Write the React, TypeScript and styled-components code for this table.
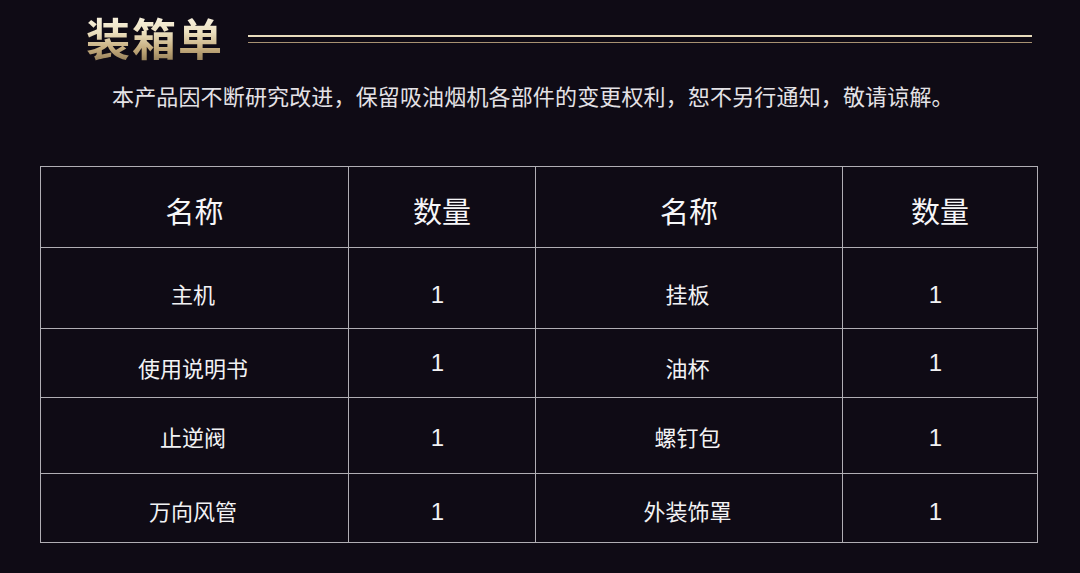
import React from "react";
import styled, { createGlobalStyle } from "styled-components";

const Global = createGlobalStyle`
  html, body { margin: 0; padding: 0; background: #0f0b15; }
  body { width: 1080px; height: 573px; overflow: hidden; font-family: "Noto Sans CJK SC", "Noto Sans", sans-serif; }
`;

const Page = styled.div`
  width: 1080px;
  height: 573px;
  background: #0f0b15;
  display: flex;
  flex-direction: column;
`;

const TitleBar = styled.div`
  display: flex;
  align-items: center;
  padding: 13px 48px 0 86px;
  height: 48px;
  gap: 24px;
`;

const Title = styled.h1`
  margin: 0;
  font-family: "Noto Sans CJK SC", sans-serif;
  font-size: 44px;
  line-height: 48px;
  font-weight: 700;
  letter-spacing: 2px;
  background: linear-gradient(to bottom, #fbf6e6 0%, #ece0c0 40%, #c4ab7c 75%, #96805a 100%);
  -webkit-background-clip: text;
  background-clip: text;
  color: transparent;
  white-space: nowrap;
`;

const Rule = styled.div`
  flex: 1;
  height: 8px;
  margin-top: 4px;
  border-top: 2px solid #e8dcbc;
  border-bottom: 1px solid #a89272;
  box-sizing: border-box;
`;

const Note = styled.p`
  margin: 19px 0 0 112px;
  font-size: 22px;
  line-height: 30px;
  color: #e4e2e6;
  letter-spacing: 0.15px;
  white-space: nowrap;
`;

const Table = styled.table`
  margin: 56px 0 0 40px;
  width: 998px;
  border-collapse: collapse;
  table-layout: fixed;
  border: 1px solid #b8b6bc;
  border-top-color: #e8e8ea;
`;

const Row = styled.tr<{ $h: number }>`
  height: ${(p) => p.$h}px;
`;

const HeadCell = styled.th<{ $w: number }>`
  width: ${(p) => p.$w}px;
  border: 1px solid #b0aeb4;
  font-weight: 400;
  font-size: 29px;
  color: #f6f6f8;
  text-align: center;
  vertical-align: middle;
  padding: 5px 0 0;
`;

const Cell = styled.td<{ $num?: boolean; $shift: number }>`
  border: 1px solid #b0aeb4;
  text-align: center;
  vertical-align: middle;
  color: #f2f2f4;
  font-size: ${(p) => (p.$num ? 24 : 22)}px;
  font-family: ${(p) => (p.$num ? '"Liberation Sans", Arial, sans-serif' : '"Noto Sans CJK SC", sans-serif')};
  padding-top: ${(p) => (p.$shift > 0 ? p.$shift : 0)}px;
  padding-bottom: ${(p) => (p.$shift < 0 ? -p.$shift : 0)}px;
  padding-right: ${(p) => (p.$num ? 9 : 3)}px;
  padding-left: 0;
  line-height: 26px;
`;

const rows = [
  { h: 81, a: "主机", b: "挂板", shift: 9, nshift: 13 },
  { h: 69, a: "使用说明书", b: "油杯", shift: 7, nshift: -1 },
  { h: 76, a: "止逆阀", b: "螺钉包", shift: 1, nshift: 4 },
  { h: 69, a: "万向风管", b: "外装饰罩", shift: 3, nshift: 7 },
];

export default function App() {
  return (
    <Page>
      <Global />
      <TitleBar>
        <Title>装箱单</Title>
        <Rule />
      </TitleBar>
      <Note>本产品因不断研究改进，保留吸油烟机各部件的变更权利，恕不另行通知，敬请谅解。</Note>
      <Table>
        <thead>
          <Row $h={81}>
            <HeadCell $w={307}>名称</HeadCell>
            <HeadCell $w={186}>数量</HeadCell>
            <HeadCell $w={306}>名称</HeadCell>
            <HeadCell $w={194}>数量</HeadCell>
          </Row>
        </thead>
        <tbody>
          {rows.map((r) => (
            <Row key={r.a} $h={r.h}>
              <Cell $shift={r.shift}>{r.a}</Cell>
              <Cell $num $shift={r.nshift}>1</Cell>
              <Cell $shift={r.shift}>{r.b}</Cell>
              <Cell $num $shift={r.nshift}>1</Cell>
            </Row>
          ))}
        </tbody>
      </Table>
    </Page>
  );
}
